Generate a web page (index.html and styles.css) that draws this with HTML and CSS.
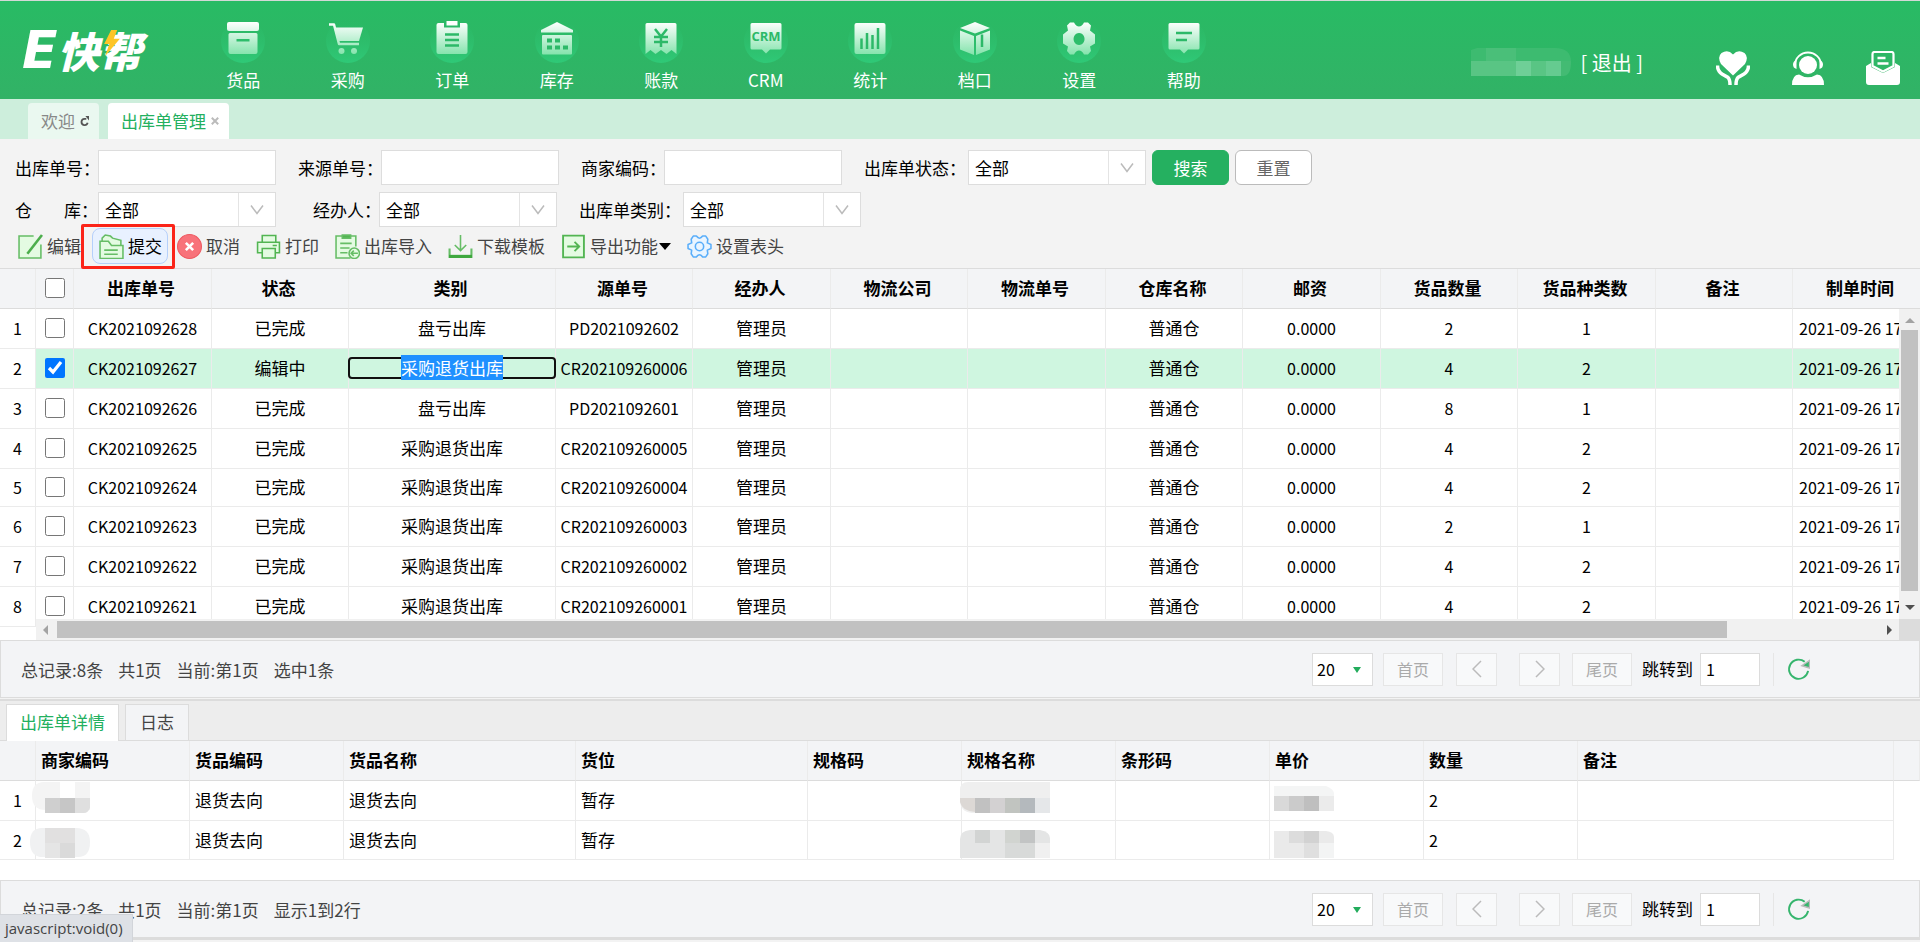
FILE: index.html
```html
<!DOCTYPE html>
<html lang="zh-CN">

<head>
    <meta charset="UTF-8">
    <title>出库单管理</title>
    <link rel="stylesheet" href="styles.css">
</head>

<body>
    <svg class="defs" width="0" height="0" aria-hidden="true">
        <defs>
            <linearGradient id="ico" gradientUnits="userSpaceOnUse" x1="0" y1="3" x2="0" y2="36">
                <stop offset="0" stop-color="#fff" />
                <stop offset="1" stop-color="#82e3ab" />
            </linearGradient>
            <linearGradient id="disc" x1="0" y1="0" x2="0" y2="1">
                <stop offset="0" stop-color="#2dbd6b" stop-opacity="0" />
                <stop offset="1" stop-color="#2fc977" />
            </linearGradient>
            <symbol id="refresh" viewBox="0 0 24 24">
                <path d="M18.500 4.500A10 10 0 1 0 22 14" fill="none" stroke="#35b56d" stroke-width="2" />
                <path d="M23.500 3v8l-8-2.500z" fill="#35b56d" />
            </symbol>
            <symbol id="down" viewBox="0 0 16 12">
                <path d="M2 1.500l6 8 6-8" fill="none" stroke="#bbb" stroke-width="1.500" />
            </symbol>
        </defs>
    </svg>

    <header class="header">
        <a class="logo" href="#"><span class="logo-e">E</span><span class="logo-cn">快帮</span>
            <svg class="bolt" viewBox="0 0 22 32" width="20" height="28">
                <path d="M10 1h7l-4 10h7L3 31l5-14H2z" fill="#fdc527" />
            </svg>
        </a>
        <nav class="nav">
            <a href="#"><svg viewBox="0 0 44 44">
                    <circle cx="22" cy="22" r="22" fill="url(#disc)" />
                    <g fill="url(#ico)">
                        <rect x="6" y="3" width="32" height="9" rx="2" />
                        <path fill-rule="evenodd" d="M9 14h26a1.500 1.500 0 0 1 1.500 1.500V33a2 2 0 0 1-2 2H9.500a2 2 0 0 1-2-2V15.500A1.500 1.500 0 0 1 9 14zm6.500 6v2.500h13V20z" />
                    </g>
                </svg>货品</a>
            <a href="#"><svg viewBox="0 0 44 44">
                    <circle cx="22" cy="22" r="22" fill="url(#disc)" />
                    <path d="M3 5.500h5l5 19.500h20" fill="none" stroke="url(#ico)" stroke-width="2.500" stroke-linejoin="round" />
                    <path d="M8 8.500h29l-4 13.500H12z" fill="url(#ico)" />
                    <circle cx="15.500" cy="32" r="3" fill="url(#ico)" />
                    <circle cx="28" cy="32" r="3" fill="url(#ico)" />
                </svg>采购</a>
            <a href="#"><svg viewBox="0 0 44 44">
                    <circle cx="22" cy="22" r="22" fill="url(#disc)" />
                    <rect x="6.500" y="4" width="31" height="31" rx="2" fill="url(#ico)" />
                    <path d="M14 3.500h16v5H14z" fill="#2bba68" />
                    <path d="M16.500 2h11v4.500h-11z" fill="#fff" />
                    <path d="M15 15.500h14M15 21h14M15 26.500h14" stroke="#2cb968" stroke-width="2.500" />
                </svg>订单</a>
            <a href="#"><svg viewBox="0 0 44 44">
                    <circle cx="22" cy="22" r="22" fill="url(#disc)" />
                    <path d="M22 3l16 8v2.500H6V11z" fill="url(#ico)" />
                    <rect x="7" y="16" width="30" height="19.500" rx="1" fill="url(#ico)" />
                    <path d="M12 19.500h5v4h-5zM20 19.500h5v4h-5zM12 26.500h5v4h-5zM20 26.500h5v4h-5zM28 26.500h5v4h-5z" fill="#2cb968" />
                </svg>库存</a>
            <a href="#"><svg viewBox="0 0 44 44">
                    <circle cx="22" cy="22" r="22" fill="url(#disc)" />
                    <path d="M8 4h28q1.500 0 1.500 1.500V35l-5-4-5 4-5.500-4-5.500 4-5-4-5 4V5.500Q6.500 4 8 4z" fill="url(#ico)" />
                    <path d="M16 10l6 7.500 6-7.500M15 18h14M15 23h14M22 17.500V28" fill="none" stroke="#2cb968" stroke-width="2.500" />
                </svg>账款</a>
            <a href="#"><svg viewBox="0 0 44 44">
                    <circle cx="22" cy="22" r="22" fill="url(#disc)" />
                    <path d="M8 4h28q1.500 0 1.500 1.500v23.500q0 1.500-1.500 1.500H26l-4 4-4-4H8q-1.500 0-1.500-1.500V5.500Q6.500 4 8 4z" fill="url(#ico)" />
                    <text x="22" y="22" class="crm-text">CRM</text>
                </svg>CRM</a>
            <a href="#"><svg viewBox="0 0 44 44">
                    <circle cx="22" cy="22" r="22" fill="url(#disc)" />
                    <rect x="6.500" y="4" width="31" height="31" rx="2" fill="url(#ico)" />
                    <path d="M13.500 19.500V30M19 14v16M24.500 16v14M30 9v21" stroke="#2cb968" stroke-width="2.500" />
                </svg>统计</a>
            <a href="#"><svg viewBox="0 0 44 44">
                    <circle cx="22" cy="22" r="22" fill="url(#disc)" />
                    <path d="M22 3l15 6-15 5.500L7 9zM7 11.500l14 5.500v19L7 30.500zM37 11.500L23 17v19l14-5.500z" fill="url(#ico)" />
                    <path d="M29 15.500V28" stroke="#2cb968" stroke-width="2.500" />
                </svg>档口</a>
            <a href="#"><svg viewBox="0 0 44 44">
                    <circle cx="22" cy="22" r="22" fill="url(#disc)" />
                    <path fill-rule="evenodd" fill="url(#ico)" d="M13 3.500h4q2 4 5 4t5-4h4l3 3-1 5 5 4v9l-5 3 1 4.500-3 3.500h-4q-2-4-5-4t-5 4h-4l-3-3.500 1-4.500-5-3v-9l5-4-1-5zM22 14a5.500 6 0 1 0 .1 0z" />
                </svg>设置</a>
            <a href="#"><svg viewBox="0 0 44 44">
                    <circle cx="22" cy="22" r="22" fill="url(#disc)" />
                    <path d="M8 4h28q1.500 0 1.500 1.500v23.500q0 1.500-1.500 1.500H26l-4 4-4-4H8q-1.500 0-1.500-1.500V5.500Q6.500 4 8 4z" fill="url(#ico)" />
                    <path d="M14 14h16M14 21h11" stroke="#2cb968" stroke-width="2.500" />
                </svg>帮助</a>
        </nav>
        <div class="user">
            <svg class="user-name" viewBox="0 0 100 28" width="100" height="28">
                <clipPath id="uc">
                    <path d="M6 0h78q16 0 16 14t-8 14H0V2z" />
                </clipPath>
                <g clip-path="url(#uc)">
                    <path d="M0 0h100v13H0z" fill="#3dbb70" />
                    <path d="M15 0h15v13H15zM30 0h15v13H30z" fill="#4abf79" />
                    <path d="M0 13h45v15H0zM60 13h15v15H60z" fill="#59c584" />
                    <path d="M45 13h15v15H45z" fill="#6fcf97" />
                    <path d="M75 13h15v15H75z" fill="#65cb90" />
                    <path d="M90 13h10v15H90z" fill="#43bb73" />
                </g>
            </svg>
            <a href="#">[ 退出 ]</a>
        </div>
        <div class="quick">
            <a href="#" aria-label="关怀"><svg viewBox="0 0 34 34" fill="#fff">
                    <path d="M17 24.500L5 13Q1 6 5.500 2 12-2 17 3.500q5-5.500 11.500-1.500Q33 6 29 13z" />
                    <path d="M1.500 14.500Q1.500 20 6 23l6 3.500q2 2 2 7.500M32.500 14.500q0 5.500-4.500 8.500l-6 3.500q-2 2-2 7.500" fill="none" stroke="#fff" stroke-width="3.500" />
                </svg></a>
            <a href="#" aria-label="客服"><svg viewBox="0 0 34 34" fill="#fff">
                    <circle cx="17" cy="14" r="9" />
                    <path d="M4 14a13 12.500 0 0 1 26 0" fill="none" stroke="#fff" stroke-width="1.800" />
                    <path d="M5.500 9v9Q2 17 2 13.500T5.500 9zM28.500 9v9q3.500-1 3.500-4.500T28.500 9z" />
                    <path d="M1 34q0-10 7-10.500Q17 29 26 23.500q7 .5 7 10.500z" />
                </svg></a>
            <a href="#" aria-label="消息"><svg viewBox="0 0 34 34" fill="#fff">
                    <path d="M0 15l5-3v4l12 6 12-6v-4l5 3v16q0 3-3 3H3q-3 0-3-3z" />
                    <path d="M6.500 15V3q0-2 2-2h17q2 0 2 2v12L17 20.500z" fill="#2eb766" stroke="#fff" stroke-width="2.200" />
                    <path d="M11.500 7h8M11.500 12.500h11" stroke="#fff" stroke-width="2.500" />
                </svg></a>
        </div>
    </header>

    <div class="page-tabs">
        <a class="page-tab" href="#">欢迎<svg viewBox="0 0 10 12" width="9" height="11">
                <path d="M8.500 7.500A3.500 3.500 0 1 1 5 3h2" fill="none" stroke="#555" stroke-width="2" />
                <path d="M6 0l4 0v5z" fill="#555" />
            </svg></a>
        <a class="page-tab active" href="#">出库单管理<svg viewBox="0 0 10 10" width="8" height="8">
                <path d="M1 1l8 8M9 1l-8 8" stroke="#bbb" stroke-width="2.500" />
            </svg></a>
    </div>

    <form class="filters">
        <div class="filter-row">
            <label class="lab-4" for="orderNo">出库单号：</label>
            <input class="box" id="orderNo" type="text">
            <label class="lab-4" for="sourceNo">来源单号：</label>
            <input class="box" id="sourceNo" type="text">
            <label class="lab-4" for="shopCode">商家编码：</label>
            <input class="box" id="shopCode" type="text">
            <label class="lab-5" for="state">出库单状态：</label>
            <span class="select">
                <select class="box" id="state"><option>全部</option></select>
                <svg><use href="#down" /></svg>
            </span>
            <button class="btn btn-search" type="button">搜索</button>
            <button class="btn" type="button">重置</button>
        </div>
        <div class="filter-row">
            <label class="lab-4 spread" for="store"><span>仓</span><span>库：</span></label>
            <span class="select">
                <select class="box" id="store"><option>全部</option></select>
                <svg><use href="#down" /></svg>
            </span>
            <label class="lab-3" for="operator">经办人：</label>
            <span class="select">
                <select class="box" id="operator"><option>全部</option></select>
                <svg><use href="#down" /></svg>
            </span>
            <label class="lab-5" for="kind">出库单类别：</label>
            <span class="select">
                <select class="box" id="kind"><option>全部</option></select>
                <svg><use href="#down" /></svg>
            </span>
        </div>
    </form>

    <div class="toolbar">
        <button type="button"><svg viewBox="0 0 24 24">
                <path d="M15 2H1v21h21V10" fill="#e4fbe2" stroke="#66bd66" stroke-width="1.500" />
                <path d="M23 1L9 19" stroke="#4cae4c" stroke-width="2.500" />
            </svg>编辑</button>
        <span class="mark">
            <button class="hover" type="button"><svg viewBox="0 0 24 24">
                    <path d="M3 9V4l3-3 5 1 2 2 8 2v6" fill="#e4fbe2" stroke="#66bd66" stroke-width="1.500" />
                    <path d="M1 7h8l3 4h11v12.500H1z" fill="#e4fbe2" stroke="#66bd66" stroke-width="1.500" />
                    <path d="M5 15.500h13M5 19.500h13" stroke="#66bd66" stroke-width="1.500" />
                </svg>提交</button>
        </span>
        <button type="button"><svg viewBox="0 0 24 24">
                <circle cx="12" cy="12" r="11.500" fill="#f8727a" stroke="#ee5a61" />
                <path d="M8.500 8.500l7 7M15.500 8.500l-7 7" stroke="#fff" stroke-width="2.500" />
            </svg>取消</button>
        <button type="button"><svg viewBox="0 0 24 24" fill="#e4fbe2" stroke="#52b552" stroke-width="1.500">
                <path d="M6 8V1.500h13V8M6 18H1.500V8h21v10H19" />
                <path d="M6 14h12.500v9H6zM16 11h4" />
            </svg>打印</button>
        <button type="button"><svg viewBox="0 0 24 24" fill="#e4fbe2" stroke="#66bd66" stroke-width="1.500">
                <path d="M20 12V2H1v21h14" />
                <path d="M7 1h8v3H7z" fill="#52b552" />
                <path d="M5 9h11M5 13.500h9M5 18h7" />
                <circle cx="18.500" cy="18.500" r="5" />
                <path d="M22 18.500h-6M18 16l-2.500 2.500L18 21" />
            </svg>出库导入</button>
        <button type="button"><svg viewBox="0 0 24 24" fill="none" stroke="#66bd66" stroke-width="1.500">
                <path d="M12 1v15M6.500 10.500L12 16l5.500-5.500" />
                <path d="M1.500 14v8h21v-8" stroke-width="2" />
                <path d="M1 21.500h22" stroke="#3fa83f" stroke-width="3" />
            </svg>下载模板</button>
        <button type="button"><svg viewBox="0 0 24 24">
                <path d="M2 1.500h20v21H2z" fill="#e4fbe2" stroke="#52b552" stroke-width="1.800" />
                <path d="M6 12h11M13 7.500l4.500 4.500-4.500 4.500" fill="none" stroke="#52b552" stroke-width="1.800" />
            </svg>导出功能<i class="caret"></i></button>
        <button type="button"><svg viewBox="0 0 24 24" fill="#eaf5ff" stroke="#5aaefa" stroke-width="1.500">
                <path d="M6 2h3q1.500 2 3 2t3-2h3l2 3-.5 3.500L23 10v4l-3.500 1.500.5 3.500-2 3h-3q-1.500-2-3-2t-3 2H6l-2-3 .5-3.500L1 14v-4l3.500-1.500L4 5z" stroke-linejoin="round" />
                <circle cx="12" cy="12" r="4" />
            </svg>设置表头</button>
    </div>

    <section class="grid">
        <div class="grid-head">
            <table>
                <colgroup>
                    <col class="c-no"><col class="c-check"><col class="c-b"><col class="c-a"><col class="c-kind"><col class="c-a"><col class="c-b"><col class="c-a"><col class="c-b"><col class="c-a"><col class="c-b"><col class="c-a"><col class="c-b"><col class="c-a"><col class="c-b">
                </colgroup>
                <thead>
                    <tr>
                        <th></th>
                        <th class="check"><input type="checkbox" aria-label="全选"></th>
                        <th>出库单号</th>
                        <th>状态</th>
                        <th>类别</th>
                        <th>源单号</th>
                        <th>经办人</th>
                        <th>物流公司</th>
                        <th>物流单号</th>
                        <th>仓库名称</th>
                        <th>邮资</th>
                        <th>货品数量</th>
                        <th>货品种类数</th>
                        <th>备注</th>
                        <th>制单时间</th>
                    </tr>
                </thead>
            </table>
        </div>
        <div class="grid-main">
            <table class="frozen">
                <tbody>
                    <tr><td>1</td></tr>
                    <tr><td>2</td></tr>
                    <tr><td>3</td></tr>
                    <tr><td>4</td></tr>
                    <tr class="short"><td>5</td></tr>
                    <tr><td>6</td></tr>
                    <tr><td>7</td></tr>
                    <tr><td>8</td></tr>
                </tbody>
            </table>
            <div class="scroll-area">
                <div class="grid-body">
                    <table>
                        <colgroup>
                            <col class="c-check"><col class="c-b"><col class="c-a"><col class="c-kind"><col class="c-a"><col class="c-b"><col class="c-a"><col class="c-b"><col class="c-a"><col class="c-b"><col class="c-a"><col class="c-b"><col class="c-a"><col class="c-b">
                        </colgroup>
                        <tbody>
                            <tr><td><input type="checkbox" aria-label="1"></td><td>CK2021092628</td><td class="cn">已完成</td><td class="cn">盘亏出库</td><td>PD2021092602</td><td class="cn">管理员</td><td></td><td></td><td class="cn">普通仓</td><td>0.0000</td><td>2</td><td>1</td><td></td><td class="time">2021-09-26 17:24:10</td></tr>
                            <tr class="selected"><td><input type="checkbox" aria-label="2" checked></td><td>CK2021092627</td><td class="cn">编辑中</td><td class="cn focus"><div><span>采购退货出库</span></div></td><td>CR202109260006</td><td class="cn">管理员</td><td></td><td></td><td class="cn">普通仓</td><td>0.0000</td><td>4</td><td>2</td><td></td><td class="time">2021-09-26 17:20:31</td></tr>
                            <tr><td><input type="checkbox" aria-label="3"></td><td>CK2021092626</td><td class="cn">已完成</td><td class="cn">盘亏出库</td><td>PD2021092601</td><td class="cn">管理员</td><td></td><td></td><td class="cn">普通仓</td><td>0.0000</td><td>8</td><td>1</td><td></td><td class="time">2021-09-26 17:18:45</td></tr>
                            <tr><td><input type="checkbox" aria-label="4"></td><td>CK2021092625</td><td class="cn">已完成</td><td class="cn">采购退货出库</td><td>CR202109260005</td><td class="cn">管理员</td><td></td><td></td><td class="cn">普通仓</td><td>0.0000</td><td>4</td><td>2</td><td></td><td class="time">2021-09-26 17:15:02</td></tr>
                            <tr class="short"><td><input type="checkbox" aria-label="5"></td><td>CK2021092624</td><td class="cn">已完成</td><td class="cn">采购退货出库</td><td>CR202109260004</td><td class="cn">管理员</td><td></td><td></td><td class="cn">普通仓</td><td>0.0000</td><td>4</td><td>2</td><td></td><td class="time">2021-09-26 17:12:20</td></tr>
                            <tr><td><input type="checkbox" aria-label="6"></td><td>CK2021092623</td><td class="cn">已完成</td><td class="cn">采购退货出库</td><td>CR202109260003</td><td class="cn">管理员</td><td></td><td></td><td class="cn">普通仓</td><td>0.0000</td><td>2</td><td>1</td><td></td><td class="time">2021-09-26 17:10:08</td></tr>
                            <tr><td><input type="checkbox" aria-label="7"></td><td>CK2021092622</td><td class="cn">已完成</td><td class="cn">采购退货出库</td><td>CR202109260002</td><td class="cn">管理员</td><td></td><td></td><td class="cn">普通仓</td><td>0.0000</td><td>4</td><td>2</td><td></td><td class="time">2021-09-26 17:06:54</td></tr>
                            <tr><td><input type="checkbox" aria-label="8"></td><td>CK2021092621</td><td class="cn">已完成</td><td class="cn">采购退货出库</td><td>CR202109260001</td><td class="cn">管理员</td><td></td><td></td><td class="cn">普通仓</td><td>0.0000</td><td>4</td><td>2</td><td></td><td class="time">2021-09-26 17:02:37</td></tr>
                        </tbody>
                    </table>
                </div>
                <div class="vbar"><i class="arrow up"></i><i class="thumb"></i><i class="arrow dn"></i></div>
                <div class="hbar"><i class="arrow lt"></i><i class="thumb"></i><i class="arrow rt"></i></div>
                <div class="corner"></div>
            </div>
        </div>
        <div class="pager">
            <div class="pager-info"><span>总记录:8条</span><span>共1页</span><span>当前:第1页</span><span>选中1条</span></div>
            <span class="page-size"><select aria-label="每页条数"><option>20</option></select><i></i></span>
            <button class="first" type="button" disabled>首页</button>
            <button class="prev" type="button" disabled aria-label="上一页"><svg viewBox="0 0 10 20"><path d="M9 2L1 10l8 8" /></svg></button>
            <button class="next" type="button" disabled aria-label="下一页"><svg viewBox="0 0 10 20"><path d="M1 2l8 8-8 8" /></svg></button>
            <button class="last" type="button" disabled>尾页</button>
            <label for="page1">跳转到</label>
            <input id="page1" type="text" value="1">
            <button class="reload" type="button" aria-label="刷新"><svg><use href="#refresh" /></svg></button>
        </div>
    </section>

    <section class="detail">
        <div class="detail-tabs">
            <a class="active" href="#">出库单详情</a>
            <a href="#">日志</a>
        </div>
        <table class="detail-table">
            <colgroup>
                <col class="d-no"><col class="d-a"><col class="d-a"><col class="d-b"><col class="d-b"><col class="d-a"><col class="d-a"><col class="d-a"><col class="d-a"><col class="d-a"><col class="d-note"><col>
            </colgroup>
            <thead>
                <tr>
                    <th></th>
                    <th>商家编码</th>
                    <th>货品编码</th>
                    <th>货品名称</th>
                    <th>货位</th>
                    <th>规格码</th>
                    <th>规格名称</th>
                    <th>条形码</th>
                    <th>单价</th>
                    <th>数量</th>
                    <th>备注</th>
                    <th></th>
                </tr>
            </thead>
            <tbody>
                <tr>
                    <td>1</td>
                    <td class="masked"><svg class="mask-code" viewBox="0 0 60 32" width="60" height="32">
                            <path d="M14 0h46v28H16Q2 28 2 14 2 0 14 0z" fill="#f4f4f4" />
                            <path d="M30 0h15v16H30z" fill="#fff" />
                            <path d="M15 16h15v15H15z" fill="#cfcfcf" /><path d="M30 16h15v15H30z" fill="#c6c6c6" /><path d="M45 16h15v10q-2 5-6 5h-9z" fill="#dfdfdf" />
                        </svg></td>
                    <td class="cn">退货去向</td>
                    <td class="cn">退货去向</td>
                    <td class="cn">暂存</td>
                    <td></td>
                    <td class="masked"><svg class="mask-spec" viewBox="0 0 90 32" width="90" height="32">
                            <path d="M8 0h82v31H12Q0 30 0 18V8Q0 0 8 0z" fill="#efefef" />
                            <path d="M0 16h15v14Q2 29 0 20z" fill="#dcd8d5" /><path d="M15 16h15v15H15z" fill="#c1c1c1" /><path d="M30 16h15v15H30z" fill="#d3d1d2" /><path d="M45 16h15v15H45z" fill="#c1c4c0" /><path d="M60 16h15v15H60z" fill="#b4b9bd" /><path d="M75 16h15v15H75z" fill="#e5e7e9" />
                        </svg></td>
                    <td></td>
                    <td class="masked"><svg class="mask-price" viewBox="0 0 60 32" width="60" height="32">
                            <path d="M0 4h52q8 3 8 8v10H0z" fill="#f4f5f5" />
                            <path d="M0 14h15v15H0z" fill="#d9d9d9" /><path d="M15 14h15v15H15z" fill="#cbcbcb" /><path d="M30 14h15v15H30z" fill="#bfbfbf" /><path d="M45 14h15v15H45z" fill="#ebebeb" />
                        </svg></td>
                    <td>2</td>
                    <td></td>
                    <td class="blank"></td>
                </tr>
                <tr class="last-row">
                    <td>2</td>
                    <td class="masked"><svg class="mask-code" viewBox="0 0 60 32" width="60" height="32">
                            <path d="M12 1h34q14 0 14 14 0 15-12 15H10Q0 28 0 15 0 1 12 1z" fill="#f0f1f2" />
                            <path d="M15 1h30v15H15z" fill="#e1e0e0" /><path d="M15 16h15v15H15z" fill="#e5e5e5" /><path d="M30 16h15v15H30z" fill="#dadada" />
                        </svg></td>
                    <td class="cn">退货去向</td>
                    <td class="cn">退货去向</td>
                    <td class="cn">暂存</td>
                    <td></td>
                    <td class="masked"><svg class="mask-spec" viewBox="0 0 90 32" width="90" height="32">
                            <path d="M10 3h70q10 2 10 8v20H0V12Q0 4 10 3z" fill="#e4e5e5" />
                            <path d="M15 3h15v13H15z" fill="#d2d4d3" /><path d="M45 3h15v13H45z" fill="#d1d4d0" /><path d="M60 3h15v13H60z" fill="#c2c4c4" /><path d="M45 16h30v15H45z" fill="#d8dad9" /><path d="M75 16h15v15H75z" fill="#f0f0f0" />
                        </svg></td>
                    <td></td>
                    <td class="masked"><svg class="mask-price" viewBox="0 0 60 32" width="60" height="32">
                            <path d="M0 4h52q8 1 8 6v21H0z" fill="#eaeaea" />
                            <path d="M15 4h15v12H15z" fill="#dcdcdc" /><path d="M30 4h15v12H30z" fill="#d2d2d2" /><path d="M30 16h15v15H30z" fill="#dfdfdf" /><path d="M45 16h15v15H45z" fill="#f3f4f4" />
                        </svg></td>
                    <td>2</td>
                    <td></td>
                    <td class="blank"></td>
                </tr>
            </tbody>
        </table>
        <div class="pager">
            <div class="pager-info"><span>总记录:2条</span><span>共1页</span><span>当前:第1页</span><span>显示1到2行</span></div>
            <span class="page-size"><select aria-label="每页条数"><option>20</option></select><i></i></span>
            <button class="first" type="button" disabled>首页</button>
            <button class="prev" type="button" disabled aria-label="上一页"><svg viewBox="0 0 10 20"><path d="M9 2L1 10l8 8" /></svg></button>
            <button class="next" type="button" disabled aria-label="下一页"><svg viewBox="0 0 10 20"><path d="M1 2l8 8-8 8" /></svg></button>
            <button class="last" type="button" disabled>尾页</button>
            <label for="page2">跳转到</label>
            <input id="page2" type="text" value="1">
            <button class="reload" type="button" aria-label="刷新"><svg><use href="#refresh" /></svg></button>
        </div>
    </section>

    <div class="status">javascript:void(0)</div>
</body>

</html>
```
FILE: styles.css
```css
* {
    box-sizing: border-box;
}

body {
    margin: 0;
    min-height: 100vh;
    background: #f3f3f3;
    color: #000;
    font-family: "Noto Sans CJK SC", sans-serif;
    font-size: 17px;
    line-height: 24px;
    overflow: hidden;
}

a {
    color: inherit;
    text-decoration: none;
}

input,
select,
button {
    margin: 0;
    font: inherit;
    color: inherit;
}

.defs {
    position: absolute;
}

/* 顶部导航 */
.header {
    display: flex;
    height: 99px;
    border-top: 1px solid #d3d9d6;
    background: linear-gradient(#28bb64, #32b266);
    color: #fff;
}

.logo {
    position: relative;
    display: flex;
    align-items: center;
    width: 191px;
    padding-left: 22px;
    font-style: italic;
    font-weight: 900;
    line-height: 40px;
}

.logo-e {
    font-family: "DejaVu Sans", sans-serif;
    font-size: 52px;
}

.logo-cn {
    font-size: 42px;
}

.bolt {
    position: absolute;
    left: 102px;
    top: 28px;
}

.nav {
    display: flex;
    width: 1045px;
}

.nav a {
    flex: 1;
    display: flex;
    flex-direction: column;
    align-items: center;
    gap: 5px;
    padding-top: 18px;
}

.nav svg {
    width: 44px;
    height: 44px;
}

.crm-text {
    fill: #2cb968;
    font: bold 13px "Open Sans", sans-serif;
    text-anchor: middle;
}

.user {
    display: flex;
    align-items: flex-start;
    gap: 10px;
    margin-left: auto;
    padding-top: 47px;
    font-size: 20px;
    line-height: 30px;
}

.quick {
    display: flex;
    align-items: flex-start;
    gap: 41px;
    padding: 50px 20px 0 73px;
}

.quick svg {
    display: block;
    width: 34px;
    height: 34px;
}

/* 页签 */
.page-tabs {
    display: flex;
    align-items: flex-end;
    gap: 9px;
    height: 40px;
    padding-left: 28px;
    background: #cdeedc;
}

.page-tab {
    display: flex;
    align-items: center;
    gap: 5px;
    height: 36px;
    padding: 0 10px 0 13px;
    border-radius: 4px 4px 0 0;
    background: #eaf8f0;
    color: #888;
}

.page-tab.active {
    background: #fff;
    color: #23b05f;
}

/* 查询条件 */
.filters {
    display: flex;
    flex-direction: column;
    gap: 7px;
    padding: 11px 15px 0;
}

.filter-row {
    display: flex;
    height: 35px;
    line-height: 36px;
    white-space: nowrap;
}

.filter-row label + * + label {
    margin-left: 22px;
}

.filter-row .lab-4 {
    width: 83px;
}

.filter-row .lab-5 {
    width: 104px;
}

.filter-row .select + .lab-3 {
    width: 66px;
    margin-left: 37px;
}

.spread {
    display: flex;
    justify-content: space-between;
}

.box {
    width: 178px;
    height: 35px;
    padding: 0 6px;
    border: 1px solid #ddd;
    border-radius: 0;
    background: #fff;
    line-height: 33px;
    outline: none;
}

.select {
    position: relative;
}

.select select,
.page-size select {
    display: block;
    appearance: none;
}

.select::after {
    content: "";
    position: absolute;
    right: 37px;
    top: 1px;
    bottom: 1px;
    width: 1px;
    background: #e4e4e4;
}

.select svg {
    position: absolute;
    right: 11px;
    top: 12px;
    width: 16px;
    height: 12px;
}

.btn {
    width: 77px;
    margin-left: 6px;
    padding: 0;
    border: 1px solid #bbb;
    border-radius: 6px;
    background: #fff;
    color: #666;
    line-height: 32px;
}

.btn-search {
    border-color: #25b060;
    background: #25b060;
    color: #fff;
}

/* 工具栏 */
.toolbar {
    display: flex;
    height: 41px;
    padding: 1px 0 4px 10px;
    color: #444;
}

.toolbar button {
    display: flex;
    align-items: center;
    gap: 4px;
    height: 36px;
    padding: 0 8px;
    border: 0;
    border-radius: 8px;
    background: none;
    line-height: 24px;
    white-space: nowrap;
}

.toolbar svg {
    flex: none;
    width: 25px;
    height: 25px;
}

.toolbar .mark {
    position: relative;
    width: 80px;
}

.toolbar .hover {
    margin-left: 3px;
    padding: 0 5px 0 6px;
    border: 1px solid #b5d0fb;
    background: #e8f1ff;
    color: #000;
}

.mark::after {
    content: "";
    position: absolute;
    left: -8px;
    top: -4px;
    width: 88px;
    height: 39px;
    border: 3px solid #fb2418;
    border-radius: 2px;
    pointer-events: none;
}

.caret {
    margin-left: -3px;
    border: 6px solid transparent;
    border-top: 7px solid #000;
    border-bottom: 0;
}

/* 主表格 */
table {
    table-layout: fixed;
    border-collapse: separate;
    border-spacing: 0;
}

th,
td {
    padding: 0;
    border-right: 1px solid #ebebeb;
    text-align: center;
    white-space: nowrap;
}

th {
    height: 40px;
    padding: 0 3px 1px 0;
    border-bottom: 1px solid #dcdcdc;
    font-weight: bold;
}

td {
    height: 40px;
    padding-bottom: 1px;
    border-bottom: 1px solid #ebebeb;
    font-size: 16px;
}

td.cn {
    font-size: 17px;
}

.short td {
    height: 38px;
}

td input,
th input {
    display: block;
    width: 20px;
    height: 20px;
    margin: 0 auto;
}

th.check {
    padding-right: 0;
}

.grid-head {
    border-top: 1px solid #dcdcdc;
    background: #f3f4f6;
    overflow: hidden;
}

.grid-head table {
    width: 1931px;
}

.grid-body table {
    width: 1895px;
}

.c-no {
    width: 36px;
}

.c-check {
    width: 38px;
}

.c-a {
    width: 137px;
}

.c-b {
    width: 138px;
}

.c-kind {
    width: 207px;
}

.grid-main {
    display: flex;
    height: 331px;
    background: #fff;
}

.frozen {
    width: 36px;
    flex: none;
    align-self: flex-start;
}

.scroll-area {
    flex: 1;
    min-width: 0;
    display: grid;
    grid-template-columns: minmax(0, 1fr) 21px;
    grid-template-rows: minmax(0, 1fr) 21px;
}

.grid-body {
    overflow: hidden;
}

.selected td {
    background: #cff6e0;
}

.grid .time {
    padding-left: 6px;
    text-align: left;
}

.focus div {
    margin: 0 -1px;
    border: 2px solid #101010;
    border-radius: 4px;
    line-height: 18px;
}

.focus span {
    background: #1e90ff;
    color: #fff;
}

.vbar,
.hbar {
    display: flex;
    align-items: center;
    justify-content: space-between;
    background: #f1f1f1;
}

.vbar {
    flex-direction: column;
    padding: 9px 0;
}

.hbar {
    padding: 0 7px;
}

.thumb {
    background: #c1c1c1;
}

.vbar .thumb {
    width: 17px;
    flex: 1;
    margin: 7px 0 14px;
}

.hbar .thumb {
    height: 17px;
    flex: 1;
    margin: 0 160px 0 9px;
}

.arrow {
    border: 5px solid transparent;
}

.up {
    border-top: 0;
    border-bottom-color: #a3a3a3;
}

.dn {
    border-bottom: 0;
    border-top-color: #505050;
}

.lt {
    border-left: 0;
    border-right-color: #a3a3a3;
}

.rt {
    border-right: 0;
    border-left-color: #505050;
}

.corner {
    background: #dcdcdc;
}

/* 分页 */
.pager {
    display: flex;
    align-items: center;
    height: 58px;
    padding: 0 109px 0 20px;
    border: 1px solid #dcdcdc;
    background: #f3f4f6;
}

.pager-info {
    display: flex;
    gap: 15px;
    margin-right: auto;
    padding-top: 2px;
    color: #444;
}

.page-size {
    position: relative;
}

.page-size select {
    width: 61px;
    height: 33px;
    padding: 0 4px;
    border: 1px solid #dcdcdc;
    border-radius: 0;
    background: #fff;
    font-size: 16px;
}

.page-size i {
    position: absolute;
    right: 12px;
    top: 14px;
    border: 4px solid transparent;
    border-top: 6px solid #22ac5c;
    border-bottom: 0;
}

.pager button {
    height: 33px;
    padding: 0;
    border: 1px solid #e6e6e6;
    background: #f8f9fa;
    color: #aaa;
    font-size: 16px;
    line-height: 24px;
}

.pager .first,
.pager .last {
    width: 60px;
}

.pager .first {
    margin: 0 13px 0 10px;
}

.pager .last {
    margin: 0 10px 0 12px;
}

.pager .prev,
.pager .next {
    width: 41px;
}

.pager .next {
    margin-left: 22px;
}

.pager button svg {
    display: block;
    width: 10px;
    height: 20px;
    margin: 0 auto;
    fill: none;
    stroke: #bbb;
    stroke-width: 1.5;
}

.pager label {
    margin-right: 7px;
}

.pager input {
    width: 60px;
    height: 33px;
    margin-right: 13px;
    padding: 0 5px;
    border: 1px solid #dcdcdc;
    background: #fff;
    font-size: 16px;
}

.pager .reload {
    padding-left: 13px;
    border-width: 0 0 0 1px;
    background: none;
}

.pager .reload svg {
    width: 23px;
    height: 24px;
}

/* 明细 */
.detail {
    margin-top: 1px;
    border-top: 2px solid #dcdcdc;
    border-bottom: 2px solid #dcdcdc;
    background: #fff;
}

.detail-tabs {
    display: flex;
    align-items: flex-end;
    gap: 6px;
    height: 40px;
    padding-left: 6px;
    border-bottom: 1px solid #dcdcdc;
    background: #ededed;
}

.detail-tabs a {
    height: 36px;
    padding: 0 14px;
    border: 1px solid #dcdcdc;
    border-bottom: 0;
    background: #f3f4f6;
    color: #444;
    line-height: 34px;
}

.detail-tabs .active {
    height: 37px;
    margin-bottom: -1px;
    padding: 0 13px;
    background: #fff;
    color: #23b05f;
}

.detail-table {
    width: 100%;
    margin-bottom: 20px;
}

.detail-table th,
.detail-table td {
    padding-left: 5px;
    text-align: left;
}

.detail-table th {
    background: #f3f4f6;
}

.detail-table tr > :first-child {
    padding-left: 0;
    text-align: center;
}

.detail-table .last-row td {
    height: 39px;
}

.detail-table .blank {
    border: 0;
}

.d-no {
    width: 36px;
}

.d-a {
    width: 154px;
}

.d-b {
    width: 232px;
}

.d-note {
    width: 316px;
}

/* 打码块盖在单元格边线上 */
.masked {
    position: relative;
}

.masked svg {
    position: absolute;
    top: 1px;
    left: -2px;
}

.last-row .masked svg {
    top: 6px;
}

.masked .mask-code {
    left: -6px;
}

.masked .mask-price {
    left: 4px;
}

/* 浏览器状态提示 */
.status {
    position: fixed;
    left: 0;
    bottom: 0;
    height: 28px;
    padding: 0 9px 0 5px;
    border-top: 1px solid #d2d5da;
    border-right: 1px solid #d2d5da;
    background: #dee1e6;
    color: #444;
    font-family: "Open Sans", sans-serif;
    font-size: 15px;
    line-height: 26px;
}
```
